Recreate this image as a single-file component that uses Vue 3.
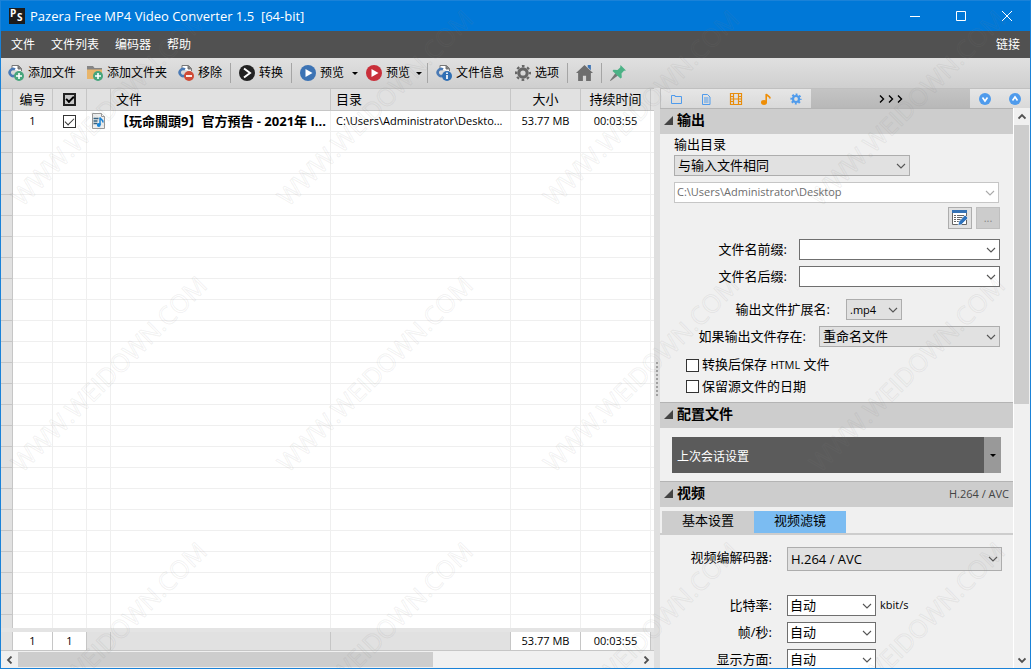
<script setup>
import { h, ref } from 'vue'

const Chevron = () =>
  h('svg', { class: 'chevron', viewBox: '0 0 10 6', 'aria-hidden': 'true' }, [
    h('path', { d: 'M1 1l4 4 4-4', fill: 'none', stroke: 'currentColor', 'stroke-width': '1.1' }),
  ])

const menus = ['文件', '文件列表', '编码器', '帮助']
const file = {
  name: '【玩命關頭9】官方預告 - 2021年 I...',
  dir: 'C:\\Users\\Administrator\\Deskto...',
  size: '53.77 MB',
  time: '00:03:55',
}
const emptyRows = 24
const checkedAll = ref(true)
const checked = ref(true)
const keepHtml = ref(false)
const keepDate = ref(false)

const tile = 266
const marks = []
for (let y = 0; y < 3; y++) for (let x = 0; x < 4; x++) marks.push({ x: 109 + x * tile, y: 108 + y * tile })
</script>

<template>
  <div class="window">
    <header class="titlebar">
      <svg class="logo" viewBox="0 0 16 16" aria-hidden="true">
        <rect width="16" height="16" fill="#1c1c1c" />
        <text x="1" y="9">P</text>
        <text x="8" y="13">S</text>
      </svg>
      <h1>Pazera Free MP4 Video Converter 1.5&nbsp; [64-bit]</h1>
      <div class="winbtns">
        <button aria-label="最小化"><svg viewBox="0 0 12 12"><path d="M1 6.5h10" /></svg></button>
        <button aria-label="最大化"><svg viewBox="0 0 12 12"><path d="M1.5 1.5h9v9h-9z" /></svg></button>
        <button aria-label="关闭"><svg viewBox="0 0 12 12"><path d="M1 1l10 10M11 1L1 11" /></svg></button>
      </div>
    </header>

    <nav class="menubar">
      <button v-for="m in menus" :key="m">{{ m }}</button>
      <button class="right">链接</button>
    </nav>

    <div class="toolbar">
      <button>
        <svg viewBox="0 0 16 16">
          <path d="M4 4.5V.5h6.5l3 3V6" fill="#fff" stroke="#777" />
          <path d="M10 .5v3.5h3.5" fill="#777" stroke="#777" />
          <path d="M7 4.5a3.5 3.5 0 100 6" fill="none" stroke="#4a7ab5" stroke-width="2.6" />
          <circle cx="11" cy="11" r="5" fill="#46a57c" />
          <path d="M11 8v6M8 11h6" stroke="#fff" stroke-width="1.6" />
        </svg>添加文件
      </button>
      <button>
        <svg viewBox="0 0 16 16">
          <path d="M0 1h6l1.5 2H15v3H0z" fill="#858585" />
          <path d="M0 4.5h15V14H0z" fill="#e8b56a" />
          <circle cx="11" cy="11" r="5" fill="#46a57c" />
          <path d="M11 8v6M8 11h6" stroke="#fff" stroke-width="1.6" />
        </svg>添加文件夹
      </button>
      <button>
        <svg viewBox="0 0 16 16">
          <path d="M4 4.5V.5h6.5l3 3V6" fill="#fff" stroke="#777" />
          <path d="M10 .5v3.5h3.5" fill="#777" stroke="#777" />
          <path d="M7 4.5a3.5 3.5 0 100 6" fill="none" stroke="#4a7ab5" stroke-width="2.6" />
          <circle cx="11" cy="11" r="5" fill="#cf4a35" />
          <path d="M8 11h6" stroke="#fff" stroke-width="1.8" />
        </svg>移除
      </button>
      <i class="sep"></i>
      <button>
        <svg viewBox="0 0 16 16">
          <circle cx="8" cy="8" r="8" fill="#222" />
          <path d="M5 3.5L11 8l-6 4.5" fill="none" stroke="#fff" stroke-width="2" />
        </svg>转换
      </button>
      <i class="sep"></i>
      <button>
        <svg viewBox="0 0 16 16"><circle cx="8" cy="8" r="8" fill="#3c73b4" /><path d="M5.5 4l7 4-7 4z" fill="#fff" /></svg>预览
        <span class="caret"></span>
      </button>
      <button class="tight">
        <svg viewBox="0 0 16 16"><circle cx="8" cy="8" r="8" fill="#c92f3a" /><path d="M5.5 4l7 4-7 4z" fill="#fff" /></svg>预览
        <span class="caret"></span>
      </button>
      <i class="sep"></i>
      <button>
        <svg viewBox="0 0 16 16">
          <path d="M4 4.5V.5h6.5l3 3V6" fill="#fff" stroke="#777" />
          <path d="M10 .5v3.5h3.5" fill="#777" stroke="#777" />
          <path d="M7 4.5a3.5 3.5 0 100 6" fill="none" stroke="#4a7ab5" stroke-width="2.6" />
          <circle cx="11" cy="11" r="5" fill="#2f6fb4" />
          <path d="M11 10v4M11 7.5V9" stroke="#fff" stroke-width="1.7" />
        </svg>文件信息
      </button>
      <button>
        <svg viewBox="0 0 16 16">
          <circle cx="8" cy="8" r="4.2" fill="none" stroke="#666" stroke-width="3.2" />
          <circle cx="8" cy="8" r="6.9" fill="none" stroke="#666" stroke-width="2.2" stroke-dasharray="2.7 2.719" stroke-dashoffset="1.35" />
        </svg>选项
      </button>
      <i class="sep"></i>
      <button aria-label="主页" class="home">
        <svg viewBox="0 0 16 16">
          <path d="M11 0h3v5l-3-3z" fill="#3c73b4" />
          <path d="M8 0L0 7.5h2V15h4.5v-5h3v5H14V7.500h2z" fill="#6e6e6e" />
        </svg>
      </button>
      <i class="sep"></i>
      <button aria-label="置顶">
        <svg viewBox="0 0 16 16">
          <path d="M5.5 8L8 10.5.5 16 0 15.5z" fill="#777" />
          <path d="M10.5 0L16 5.5l-2 .3-2.5 2.7.3 4-1.3 1L2.500 6l1-1.300 4 .3L10.200 2.500z" fill="#4cb286" />
        </svg>
      </button>
    </div>

    <main class="body">
      <section class="list">
        <div class="gridwrap">
          <table>
            <colgroup><col class="c0" /><col class="c1" /><col class="c2" /><col class="c3" /><col /><col class="c5" /><col class="c6" /><col class="c6" /><col class="c8" /></colgroup>
            <thead>
              <tr>
                <th></th><th>编号</th>
                <th><input v-model="checkedAll" class="check dark" type="checkbox" aria-label="全选" /></th>
                <th></th><th class="l">文件</th><th class="l">目录</th><th>大小</th><th>持续时间</th><th></th>
              </tr>
            </thead>
            <tbody>
              <tr>
                <td></td><td>1</td>
                <td><input v-model="checked" class="check" type="checkbox" aria-label="选择文件 1" /></td>
                <td>
                  <svg class="ficon" viewBox="0 0 13 16">
                    <path d="M.5.5h9l3 3v12H.5z" fill="#eee" stroke="#999" />
                    <path d="M9.5.5v3h3" fill="#fff" stroke="#999" />
                    <path d="M1.5 5.5h5M1.5 8h4M1.5 10.5h4" stroke="#35617f" stroke-width="1.5" />
                    <path d="M8 12V4.5c.5 2 3.5 2 3 5" fill="none" stroke="#1583d8" stroke-width="1.5" />
                    <circle cx="6.8" cy="12" r="1.9" fill="#1583d8" />
                  </svg>
                </td>
                <td class="l name">{{ file.name }}</td><td class="l">{{ file.dir }}</td><td>{{ file.size }}</td><td>{{ file.time }}</td><td></td>
              </tr>
              <tr v-for="n in emptyRows" :key="n"><td v-for="c in 9" :key="c"></td></tr>
            </tbody>
          </table>
        </div>
        <table class="totals">
          <colgroup><col class="c0" /><col class="c1" /><col class="c2" /><col class="c3" /><col /><col class="c5" /><col class="c6" /><col class="c6" /><col class="c8" /></colgroup>
          <tbody>
            <tr><td></td><td class="w">1</td><td class="w">1</td><td></td><td></td><td></td><td class="w">{{ file.size }}</td><td class="w">{{ file.time }}</td><td></td></tr>
          </tbody>
        </table>
        <div class="hscroll">
          <button aria-label="向左滚动"><svg viewBox="0 0 8 8"><path d="M5.5.5L2 4l3.5 3.5" /></svg></button>
          <div class="htrack"><div class="hthumb"></div></div>
          <button aria-label="向右滚动"><svg viewBox="0 0 8 8"><path d="M2.5.5L6 4 2.5 7.5" /></svg></button>
        </div>
      </section>

      <div class="splitter"><span class="grip"></span></div>

      <aside class="panel">
        <div class="quick">
          <button aria-label="输出">
            <svg viewBox="0 0 14 14"><path d="M2.500 3.500h3.500v1h6.500v7h-10z" fill="none" stroke="#4f9bec" /></svg>
          </button>
          <button aria-label="配置文件">
            <svg viewBox="0 0 14 14"><path d="M3.500 2.500h5l2.500 2.500v7.500H3.500zM5 6h4.500M5 8h4.500M5 10h4.500" fill="none" stroke="#4f9bec" /></svg>
          </button>
          <button aria-label="视频">
            <svg viewBox="0 0 14 14"><path d="M1.5 1.5h11v11h-11zM4.500 1.500v11M9.500 1.500v11M4.500 7h5M1.500 4.500h3M1.500 7h3M1.500 9.500h3M9.500 4.500h3M9.500 7h3M9.500 9.500h3" fill="none" stroke="#e88d0c" stroke-width="1.2" /></svg>
          </button>
          <button aria-label="音频">
            <svg viewBox="0 0 14 14"><ellipse cx="5" cy="10.5" rx="3" ry="2.4" fill="#ee8e07" /><path d="M7.200 10.500V2c.5 2 3.500 1.500 4 4.500" fill="none" stroke="#ee8e07" stroke-width="1.6" /></svg>
          </button>
          <button aria-label="设置">
            <svg viewBox="0 0 14 14">
              <circle cx="7" cy="7" r="3" fill="none" stroke="#4f9bec" stroke-width="2.2" />
              <circle cx="7" cy="7" r="4.7" fill="none" stroke="#4f9bec" stroke-width="1.8" stroke-dasharray="1.9 1.791" stroke-dashoffset=".95" />
            </svg>
          </button>
          <button class="more" aria-label="更多">
            <svg viewBox="0 0 24 8"><path d="M1 .5L4.500 4 1 7.500M10 .5L13.500 4 10 7.500M19 .5L22.500 4 19 7.500" /></svg>
          </button>
          <button aria-label="全部展开">
            <svg viewBox="0 0 14 14"><circle cx="7" cy="7" r="6" fill="#4f9bec" /><path d="M4.500 5.500L7 9l2.500-3.500" fill="none" stroke="#fff" stroke-width="1.6" /></svg>
          </button>
          <button aria-label="全部折叠">
            <svg viewBox="0 0 14 14"><circle cx="7" cy="7" r="6" fill="#4f9bec" /><path d="M4.500 8.500L7 5l2.500 3.500" fill="none" stroke="#fff" stroke-width="1.6" /></svg>
          </button>
        </div>

        <div class="scrollarea">
          <div class="sections">
            <h2><span class="tri"></span>输出</h2>
            <div class="out">
              <label for="outdir">输出目录</label>
              <div class="combo gray dirmode"><select id="outdir"><option>与输入文件相同</option></select><Chevron /></div>
              <div class="combo off"><select disabled aria-label="输出路径"><option>C:\Users\Administrator\Desktop</option></select><Chevron /></div>
              <div class="btns">
                <button aria-label="编辑列表">
                  <svg viewBox="0 0 16 16">
                    <path d="M.5.5h14v14H.5z" fill="#fff" stroke="#666" />
                    <path d="M0 0h15v3H0z" fill="#3572b5" />
                    <path d="M2 5.500h2M2 7.500h2M2 9.500h2M2 11.500h2M5 5.500h7M5 7.500h6M5 9.500h4M5 11.500h2" stroke="#666" />
                    <path d="M6 15.500l1-4 6-6.500 3 3-6.500 6.500z" fill="#2f73bd" stroke="#fff" stroke-width=".6" />
                  </svg>
                </button>
                <button class="dots" disabled aria-label="浏览">...</button>
              </div>
              <div class="row"><label for="prefix">文件名前缀:</label><div class="combo grow"><select id="prefix"><option></option></select><Chevron /></div></div>
              <div class="row"><label for="suffix">文件名后缀:</label><div class="combo grow"><select id="suffix"><option></option></select><Chevron /></div></div>
              <div class="row ext"><label for="ext">输出文件扩展名:</label><div class="combo gray"><select id="ext"><option>.mp4</option></select><Chevron /></div></div>
              <div class="row exist"><label for="exist">如果输出文件存在:</label><div class="combo gray grow"><select id="exist"><option>重命名文件</option></select><Chevron /></div></div>
              <label class="tick"><input v-model="keepHtml" class="check" type="checkbox" /><span>转换后保存 <small>HTML</small> 文件</span></label>
              <label class="tick"><input v-model="keepDate" class="check" type="checkbox" /><span>保留源文件的日期</span></label>
            </div>

            <h2><span class="tri"></span>配置文件</h2>
            <div class="profile">
              <button class="pname">上次会话设置</button>
              <button class="pdrop" aria-label="选择配置"><span class="caret"></span></button>
            </div>

            <h2><span class="tri"></span>视频<em>H.264 / AVC</em></h2>
            <div class="tabs"><button>基本设置</button><button class="on">视频滤镜</button></div>
            <div class="video">
              <div class="row codec"><label for="codec">视频编解码器:</label><div class="combo gray grow"><select id="codec"><option>H.264 / AVC</option></select><Chevron /></div></div>
              <div class="row"><label for="rate">比特率:</label><div class="combo"><select id="rate"><option>自动</option></select><Chevron /></div><span class="unit">kbit/s</span></div>
              <div class="row"><label for="fps">帧/秒:</label><div class="combo"><select id="fps"><option>自动</option></select><Chevron /></div></div>
              <div class="row"><label for="aspect">显示方面:</label><div class="combo"><select id="aspect"><option>自动</option></select><Chevron /></div></div>
            </div>
          </div>
          <div class="vscroll">
            <button aria-label="向上滚动"><svg viewBox="0 0 8 8"><path d="M.5 5.500L4 2l3.500 3.500" /></svg></button>
            <div class="vtrack"><div class="vthumb"></div></div>
            <button aria-label="向下滚动"><svg viewBox="0 0 8 8"><path d="M.5 2.500L4 6l3.500-3.500" /></svg></button>
          </div>
        </div>
      </aside>
    </main>

    <svg class="watermark" aria-hidden="true">
      <g v-for="m in marks" :key="m.x + '-' + m.y" :transform="`translate(${m.x} ${m.y}) rotate(-45)`">
        <text text-anchor="middle" y="9">WWW.WEIDOWN.COM</text>
      </g>
    </svg>
  </div>
</template>

<style>
body { margin: 0; }
</style>

<style scoped>
*, *::after { box-sizing: border-box; }
.window {
  position: relative;
  display: flex;
  flex-direction: column;
  height: 100vh;
  overflow: hidden;
  border: 1px solid #1a82d8;
  background: #f0f0f0;
  color: #000;
  font: 12px/18px "Open Sans", "Noto Sans CJK SC", sans-serif;
}
button, select {
  margin: 0;
  padding: 0;
  border: 0;
  border-radius: 0;
  background: none;
  color: inherit;
  font: inherit;
}
svg { flex: none; }

.titlebar { display: flex; flex: none; align-items: center; height: 30px; padding-left: 8px; background: #0078d7; color: #fff; }
.logo { width: 16px; height: 16px; }
.logo text { fill: #fff; font: 700 10px "Open Sans", sans-serif; }
h1 { flex: 1; margin: 0 0 0 5px; font-size: 13px; font-weight: 400; white-space: nowrap; }
.winbtns { display: flex; }
.winbtns button { display: grid; place-items: center; width: 46px; height: 30px; }
.winbtns svg { width: 12px; height: 12px; fill: none; stroke: #fff; }

.menubar { display: flex; flex: none; align-items: center; gap: 16px; height: 27px; padding: 0 10px; background: #515151; color: #fff; }
.menubar .right { margin-left: auto; }

.toolbar { display: flex; flex: none; align-items: center; height: 30px; padding-left: 7px; background: linear-gradient(#e0e0e0, #cfcfcf); white-space: nowrap; }
.toolbar button { display: flex; align-items: center; gap: 4px; margin-right: 11px; }
.toolbar button:has(+ .sep) { margin-right: 8px; }
.toolbar button:has(.caret) { margin-right: 8px; }
.toolbar button.tight { margin-right: 5px; }
.toolbar svg { width: 16px; height: 16px; }
.toolbar .home svg { width: 17px; height: 17px; }
.sep { width: 1px; height: 20px; margin-right: 8px; background: #a5a5a5; }
.caret { width: 0; height: 0; border: 3px solid transparent; border-top-color: #000; border-bottom: 0; }
.toolbar .caret { margin-left: 4px; }
.toolbar .tight .caret { margin-left: 2px; }

.body { display: flex; flex: 1; min-height: 0; }
.list { display: flex; flex: 1; flex-direction: column; min-width: 0; border-top: 1px solid #c0c0c0; background: #fff; }
.gridwrap { flex: 1; min-height: 0; overflow: hidden; border-bottom: 4px solid #e4e4e4; }
table { width: 100%; border-collapse: separate; border-spacing: 0; table-layout: fixed; }
.c0 { width: 12px; }
.c1 { width: 40px; }
.c2 { width: 34px; }
.c3 { width: 24px; }
.c5 { width: 180px; }
.c6 { width: 70px; }
.c8 { width: 3px; }
th, td { height: 21px; padding: 0; overflow: hidden; border-right: 1px solid #efefef; border-bottom: 1px solid #efefef; font-size: 11px; font-weight: 400; line-height: 16px; text-align: center; text-overflow: ellipsis; white-space: nowrap; }
th { height: 22px; padding-bottom: 2px; border-color: #c6c6c6; background: #e1e1e1; font-size: 13px; line-height: 18px; }
td:first-child { border-color: #c6c6c6; background: #e1e1e1; }
th:last-child, td:last-child { border-right: 0; }
.l { padding-left: 5px; text-align: left; }
.name { font-size: 13px; font-weight: 700; }
.ficon { display: block; width: 13px; height: 16px; margin: 0 auto; }
.check { display: block; width: 13px; height: 13px; margin: 0; appearance: none; border: 1px solid #333; background: #fff; }
th .check, td .check { margin: 0 auto; }
th .check { margin-top: 2px; }
.check.dark { border-width: 2px; border-color: #222; background: #c8c8c8; }
.check:checked::after { display: block; width: 9px; height: 5px; margin: 2px 1px; border: solid #333; border-width: 0 0 1px 1px; content: ""; transform: rotate(-45deg); }
.check.dark:checked::after { width: 8px; height: 5px; margin: 1px 0 0 1px; border-color: #000; border-width: 0 0 2px 2px; }
.totals td { height: 19px; border-color: #c6c6c6; background: #e1e1e1; }
.totals .w { background: #fff; }

.hscroll { display: flex; flex: none; align-items: center; height: 17px; background: #f0f0f0; }
.hscroll button { display: grid; place-items: center; width: 17px; height: 17px; }
.hscroll svg, .vscroll svg { width: 8px; height: 8px; fill: none; stroke: #505050; stroke-width: 1.8; }
.htrack { flex: 1; height: 15px; }
.hthumb { width: 67%; height: 15px; background: #cdcdcd; }

.splitter { display: grid; flex: none; place-items: center; width: 6px; background: #dfdfdf; }
.grip { width: 2px; height: 34px; margin-top: 2px; background: repeating-linear-gradient(#a0a0a0 0 2px, transparent 2px 4px); }

.panel { display: flex; flex: none; flex-direction: column; width: 370px; }
.quick { display: flex; flex: none; height: 20px; border: solid #c0c0c0; border-width: 1px 0 0 1px; background: linear-gradient(#e6e6e6, #d9d9d9); }
.quick button { display: grid; place-items: center; width: 30px; }
.quick svg { width: 14px; height: 14px; }
.quick .more { flex: 1; background: linear-gradient(#c4c4c4, #b8b8b8); }
.quick .more svg { width: 24px; height: 8px; fill: none; stroke: #000; stroke-width: 1.4; }

.scrollarea { display: flex; flex: 1; min-height: 0; }
.sections { flex: 1; min-width: 0; overflow: hidden; }
h2 { display: flex; align-items: center; height: 26px; margin: 0; padding: 0 4px 4px; border-top: 1px solid #b4b4b4; background: #cdcdcd; font-size: 14px; font-weight: 700; line-height: 20px; }
h2 em { margin: 2px 0 0 auto; color: #444; font-size: 11px; font-style: normal; font-weight: 400; }
.tri { margin: 2px 4px 0 0; border-bottom: 9px solid #444; border-left: 9px solid transparent; }

.out { display: flex; flex-direction: column; height: 268px; padding: 1px 13px 0 14px; font-size: 13px; }
.combo { position: relative; height: 21px; border: 1px solid #6f6f6f; background: #fff; }
.combo select { display: block; width: 100%; height: 100%; padding: 0 20px 2px 3px; appearance: none; font-size: 13px; line-height: 18px; opacity: 1; }
.combo .chevron { position: absolute; top: 50%; right: 3px; width: 10px; height: 6px; margin-top: -3px; color: #555; pointer-events: none; }
.gray { border-color: #adadad; background: #e1e1e1; }
.grow { flex: 1; }
.dirmode { width: 236px; margin-top: 2px; }
.off { margin: 6px 1px 0 0; border-color: #c6c6c6; color: #6d6d6d; }
.combo.off select { padding-left: 2px; font-size: 11px; }
.off .chevron { color: #aaa; }
.btns { display: flex; justify-content: flex-end; gap: 4px; margin: 4px 0 10px; }
.btns button { display: grid; place-items: center; width: 24px; height: 22px; border: 1px solid #adadad; background: #e1e1e1; }
.btns svg { width: 16px; height: 16px; }
.btns .dots { border-color: #bfbfbf; background: #ccc; color: #888; font-size: 11px; }
.row { display: flex; flex: none; align-items: center; margin-bottom: 6px; }
.row label { width: 113px; margin-right: 12px; padding-bottom: 2px; text-align: right; white-space: nowrap; }
.ext { margin-top: 6px; }
.ext label { width: 156px; margin-right: 16px; }
.ext .combo { width: 56px; }
.ext .combo select { padding-bottom: 0; font-size: 11px; }
.exist label { width: 132px; margin-right: 13px; }
.tick { display: flex; align-items: center; gap: 3px; height: 21px; margin-left: 12px; }
.tick span { padding-bottom: 2px; }
.exist + .tick { margin-top: 2px; }
.tick small { font-size: 11px; }

.profile { display: flex; height: 53px; padding: 9px 12px 8px; }
.pname { flex: 1; padding: 4px 5px 0; background: #5b5b5b; color: #fff; text-align: left; }
.pdrop { display: grid; place-items: center; width: 17px; background: #999; }

.tabs { display: flex; height: 28px; padding: 4px 2px 0; border-bottom: 2px solid #cdcdcd; font-size: 13px; }
.tabs button { width: 92px; padding-bottom: 4px; background: #cdcdcd; }
.tabs .on { background: #7bbcf2; }
.video { padding: 12px 11px 0 14px; font-size: 13px; }
.video .row label { width: 98px; margin-right: 15px; }
.video .row .combo { width: 89px; }
.video .combo select { padding-left: 2px; }
.video .codec { margin-bottom: 24px; }
.video .codec label { padding-bottom: 4px; }
.video .codec .combo { width: auto; height: 24px; }
.video .codec select { padding: 0 20px 0 3px; }
.unit { margin-left: 4px; padding-bottom: 1px; font-size: 11px; }

.vscroll { display: flex; flex: none; flex-direction: column; width: 17px; border-left: 1px solid #fff; background: #f0f0f0; }
.vscroll button { display: grid; place-items: center; height: 17px; }
.vtrack { flex: 1; }
.vthumb { width: 15px; height: 53%; background: #cdcdcd; }

.watermark { position: absolute; inset: -1px; width: calc(100% + 2px); height: calc(100% + 2px); pointer-events: none; }
.watermark text { fill: none; stroke: #808080; stroke-opacity: .11; stroke-width: 1; font: 25px "Open Sans", sans-serif; }
</style>
